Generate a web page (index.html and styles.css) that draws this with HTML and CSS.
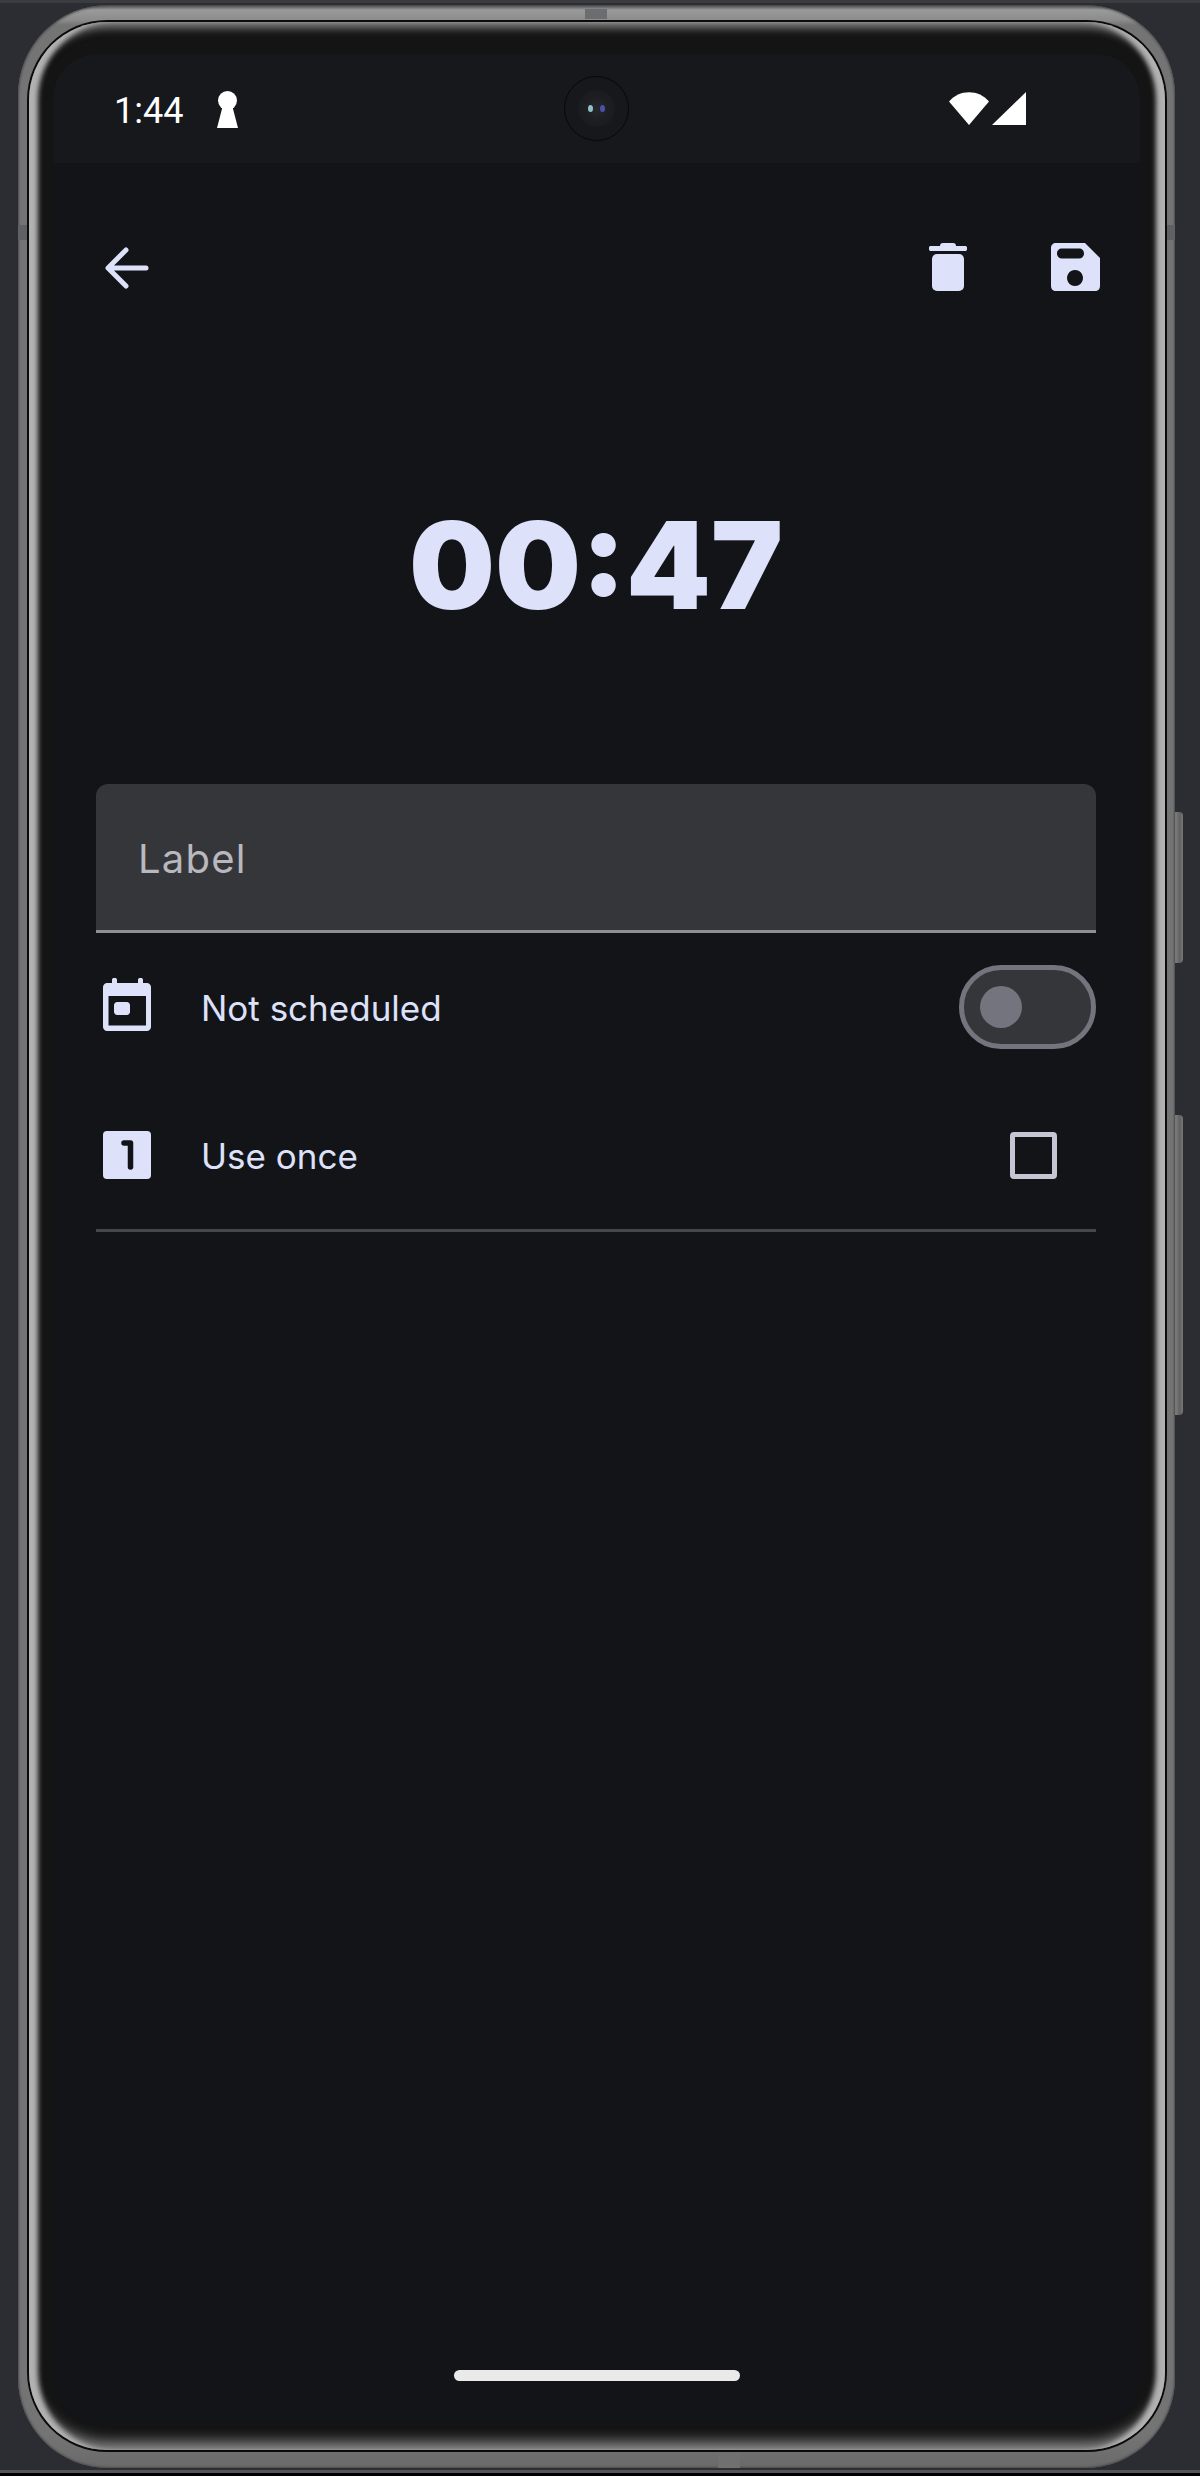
FILE: index.html
```html
<!DOCTYPE html>
<html lang="en">
<head>
<meta charset="utf-8">
<title>Alarm</title>
<link rel="stylesheet" href="styles.css">
</head>
<body>
<div class="page">
  <div class="side-btn side-btn-power"></div>
  <div class="side-btn side-btn-volume"></div>
  <div class="device">
    <div class="seam seam-top"></div>
    <div class="seam seam-bottom"></div>
    <div class="seam seam-left"></div>
    <div class="seam seam-right"></div>
    <div class="bezel">
      <div class="screen">
        <div class="display">
          <div class="camera"><div class="lens"><i class="dot dot-a"></i><i class="dot dot-b"></i></div></div>
          <header class="status">
            <div class="status-left">
              <span class="clock">1:44</span>
              <svg class="ic-key" viewBox="0 0 21 37"><circle cx="10.5" cy="9.5" r="9.5"/><path d="M6 14h9l6 23H0z"/></svg>
            </div>
            <div class="status-right">
              <svg class="ic-wifi" viewBox="0 0 40 33"><path d="M0 9.5C10 -3 30 -3 40 9.5L20 33z"/></svg>
              <svg class="ic-signal" viewBox="0 0 34 33"><path d="M34 0V33H0z"/></svg>
            </div>
          </header>
          <main class="content">
            <nav class="toolbar">
              <svg class="ic-back" viewBox="0 0 44 42"><path d="M41 21H4M21 3 3 21l18 18"/></svg>
              <div class="actions">
                <svg class="ic-trash" viewBox="0 0 38 48"><path d="M11 3c0-2 1-3 3-3h10c2 0 3 1 3 3h9c3 0 3 5 0 5H2C-1 8-1 3 2 3z"/><rect x="3" y="11" width="32" height="37" rx="5"/></svg>
                <svg class="ic-save" viewBox="0 0 49 48"><path fill-rule="evenodd" d="M5 0H34L49 15V43c0 3-2 5-5 5H5c-3 0-5-2-5-5V5C0 2 2 0 5 0zM11 5.500c-3 0-5 2-5 5s2 5 5 5H28c3 0 5-2 5-5s-2-5-5-5zM24 27a8 8 0 1 0 .01 0z"/></svg>
              </div>
            </nav>
            <h1 class="time">00:47</h1>
            <div class="field"><span class="field-label">Label</span></div>
            <div class="row row-schedule">
              <svg class="ic-row" viewBox="0 0 48 53"><path fill-rule="evenodd" d="M9 2c0-3 5-3 5 0v3h21V2c0-3 5-3 5 0v3h4c2 0 4 2 4 4v40c0 2-2 4-4 4H4c-2 0-4-2-4-4V9c0-2 2-4 4-4h5zM5.500 18V47.500H43V18zM14 24h10c1.500 0 3 1.500 3 3v7c0 1.500-1.500 3-3 3H14c-1.500 0-3-1.500-3-3v-7c0-1.500 1.500-3 3-3z"/></svg>
              <span class="row-text">Not scheduled</span>
              <div class="toggle"><span class="knob"></span></div>
            </div>
            <div class="row row-once">
              <svg class="ic-row ic-one" viewBox="0 0 48 48"><rect class="one-bg" width="48" height="48" rx="4"/><path class="one-fg" d="M21 12h6.500V36"/></svg>
              <span class="row-text">Use once</span>
              <span class="checkbox"></span>
            </div>
            <hr class="divider">
          </main>
          <div class="home-bar"></div>
        </div>
      </div>
    </div>
  </div>
</div>
</body>
</html>
```
FILE: styles.css
```css
* { box-sizing: border-box; }
html, body { margin: 0; padding: 0; }
html { height: 2476px; overflow: hidden; }
body { width: 1200px; height: 2476px; overflow: hidden; background: #000; }

.page {
  position: relative;
  width: 1200px;
  height: 2473px;
  padding: 2px 25px 0 18px;
  background: #2b2d32;
  border-top: 3px solid #3a3c40;
  border-bottom: 3px solid #55565a;
}

.side-btn {
  position: absolute;
  left: 1172px;
  width: 11px;
  background: linear-gradient(90deg, #444 0, #7b7b7b 35%, #626262 70%, #777 100%);
  border-radius: 0 4px 4px 0;
}
.side-btn-power { top: 809px; height: 151px; }
.side-btn-volume { top: 1112px; height: 300px; }

.device {
  position: relative;
  height: 2463px;
  padding: 15px 8px 16px 9px;
  border-radius: 90px;
  background: linear-gradient(180deg, #4a4a4a 0, #9a9a9a 5px, #8c8c8c 15px, #747474 20px, #747474 2430px, #6a6a6a 100%);
  box-shadow: inset 0 0 2px 1px #4d4d4d;
}

.seam { position: absolute; background: #606164; }
.seam-top { left: 567px; top: 4px; width: 22px; height: 10px; background: #6c6d70; }
.seam-bottom { left: 700px; bottom: 0; width: 22px; height: 16px; background: #707070; }
.seam-left { left: 0; top: 220px; width: 9px; height: 15px; }
.seam-right { right: 0; top: 220px; width: 8px; height: 15px; }

.bezel {
  height: 100%;
  padding: 2px;
  border-radius: 80px;
  background: #0b0b0b;
}

.screen {
  height: 100%;
  padding: 32px 25px 26px 24px;
  border-radius: 78px;
  background: #141414;
  box-shadow:
    inset 11px 0 5px -2px #b2b2b2,
    inset -11px 0 5px -2px #b2b2b2,
    inset 0 9px 8px -3px #7d7d7d,
    inset 0 -11px 14px -3px #8d8d8d;
}

.display {
  position: relative;
  display: flex;
  flex-direction: column;
  height: 100%;
  border-radius: 44px;
  background: #131418;
  overflow: hidden;
}

.camera {
  position: absolute;
  left: 511px;
  top: 22px;
  width: 65px;
  height: 65px;
  padding: 13px;
  border-radius: 50%;
  border: 1px solid #08080a;
  background: #16181c;
}
.lens {
  position: relative;
  width: 37px;
  height: 37px;
  border-radius: 50%;
  background: radial-gradient(circle, #26282e 0, #1c1e22 45%, #17191d 100%);
}
.dot { position: absolute; top: 15px; width: 5px; height: 7px; border-radius: 50%; }
.dot-a { left: 10px; background: #8fc2c4; }
.dot-b { left: 22px; background: #4c50a8; }

.status {
  flex: none;
  display: flex;
  justify-content: space-between;
  align-items: flex-start;
  height: 109px;
  padding: 37px 114px 0 61px;
  background: #16181c;
}
.status-left { display: flex; align-items: flex-start; gap: 34px; }
.clock {
  margin-top: -1px;
  font: 400 36px/42px Roboto, sans-serif;
  color: #fff;
}
.status-right { display: flex; align-items: flex-start; gap: 3px; padding-top: 1px; }
.ic-key { width: 21px; height: 37px; fill: #fff; }
.ic-wifi { width: 40px; height: 33px; fill: #fff; }
.ic-signal { width: 34px; height: 33px; fill: #fff; }

.content {
  flex: 1;
  padding: 80px 44px 0 43px;
}

.toolbar {
  display: flex;
  justify-content: space-between;
  align-items: flex-start;
}
.ic-back {
  width: 44px;
  height: 42px;
  margin: 4px 0 0 9px;
  fill: none;
  stroke: #dde1f9;
  stroke-width: 5;
  stroke-linecap: round;
  stroke-linejoin: round;
}
.actions { display: flex; gap: 84px; margin-right: -4px; }
.ic-trash { width: 38px; height: 48px; fill: #dde1f9; }
.ic-save { width: 49px; height: 48px; fill: #dde1f9; }

.time {
  margin: 202px 0 0;
  text-align: center;
  font: 900 121px/144px Inter, sans-serif;
  color: #dde1f9;
}

.field {
  height: 149px;
  margin-top: 147px;
  padding: 51px 42px 0;
  background: #35363a;
  border-radius: 12px 12px 0 0;
  border-bottom: 3px solid #8e8e95;
}
.field-label {
  font: 400 40px/48px Inter, sans-serif;
  letter-spacing: 1.2px;
  color: #b8b8be;
}

.row { display: flex; align-items: center; padding-left: 7px; }
.row-schedule { height: 84px; margin-top: 32px; }
.row-once { height: 48px; margin-top: 82px; }
.ic-row { flex: none; width: 48px; fill: #dde1f9; }
.row-schedule .ic-row { height: 53px; margin-top: -5px; }
.ic-one { height: 48px; }
.one-bg { fill: #dde1f9; }
.one-fg { fill: none; stroke: #131418; stroke-width: 5.5; stroke-linecap: round; stroke-linejoin: round; }
.row-text {
  flex: 1;
  margin: 2px 0 0 50px;
  font: 400 35px/42px Inter, sans-serif;
  color: #dde1f9;
}
.toggle {
  flex: none;
  width: 137px;
  height: 84px;
  padding: 16px;
  border: 5px solid #74747f;
  border-radius: 42px;
  background: #35363a;
}
.knob {
  display: block;
  width: 42px;
  height: 42px;
  border-radius: 50%;
  background: #74747f;
}
.checkbox {
  flex: none;
  width: 47px;
  height: 47px;
  margin-right: 39px;
  border: 5px solid #c5c5d3;
  border-radius: 4px;
}
.divider {
  height: 3px;
  margin: 50px 0 0;
  border: 0;
  background: #46474b;
}

.home-bar {
  flex: none;
  width: 286px;
  height: 11px;
  margin: 0 auto 43px;
  border-radius: 6px;
  background: #eaeaea;
}
```
